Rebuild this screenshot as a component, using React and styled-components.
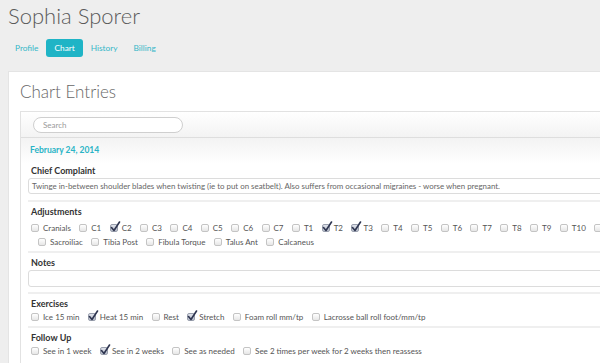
import React from "react";
import styled, { createGlobalStyle } from "styled-components";

const GlobalStyle = createGlobalStyle`
  html, body {
    margin: 0;
    padding: 0;
    overflow: hidden;
    background: #eeeeee;
    font-family: Lato, "Open Sans", sans-serif;
  }
`;

const Page = styled.div`
  width: 600px;
  height: 363px;
  overflow: hidden;
`;

const Header = styled.div`
  padding: 3px 8px 0 8px;
`;

const Name = styled.h1`
  margin: 0;
  font-size: 22px;
  line-height: 26px;
  font-weight: 300;
  color: #5a5a5a;
`;

const Tabs = styled.div`
  display: flex;
  margin-top: 10px;
  margin-left: -1px;
`;

const Tab = styled.div`
  height: 18px;
  line-height: 18px;
  padding: 0 8px;
  font-size: 8.3px;
  border-radius: 3px;
  color: ${(p) => (p.active ? "#fff" : "#35b7c8")};
  background: ${(p) => (p.active ? "#1fb4c6" : "transparent")};
`;

const Panel = styled.div`
  margin: 14px -40px 0 8px;
  min-height: 300px;
  background: #fff;
  border-left: 1px solid #e4e4e4;
  border-top: 1px solid #e4e4e4;
  padding: 9px 0 0 11px;
`;

const PanelTitle = styled.h2`
  margin: 0;
  font-size: 17px;
  line-height: 22px;
  font-weight: 300;
  color: #666;
`;

const EntryBox = styled.div`
  margin-top: 8px;
  border: 1px solid #e2e2e2;
  border-right: none;
`;

const Toolbar = styled.div`
  height: 25px;
  display: flex;
  align-items: center;
  padding-left: 12px;
  background: linear-gradient(#ffffff, #f3f3f3);
  border-bottom: 1px solid #dedede;
`;

const Search = styled.input`
  box-sizing: border-box;
  width: 150px;
  height: 16px;
  border: 1px solid #cfcfcf;
  border-radius: 8px;
  background: #fff;
  padding: 0 9px;
  font-family: inherit;
  font-size: 8px;
  outline: none;
  &::placeholder {
    color: #9a9a9a;
  }
`;

const Entry = styled.div`
  padding: 6px 0 10px 7px;
  background: linear-gradient(#f3f3f3, #ffffff 26px);
`;

const EntryDate = styled.div`
  padding-left: 2px;
  font-size: 8.5px;
  line-height: 12px;
  font-weight: 700;
  color: #29b4c6;
  margin-bottom: 9px;
`;

const Section = styled.div`
  border-top: ${(p) => (p.first ? "none" : "2px solid #efefef")};
  padding: ${(p) => (p.first ? "0" : "4px")} 0 ${(p) => p.bottom || 2}px 0;
`;

const Label = styled.div`
  padding-left: 3px;
  font-size: 9px;
  line-height: 12px;
  font-weight: 700;
  color: #333;
`;

const TextBox = styled.div`
  box-sizing: border-box;
  margin-top: 1px;
  height: ${(p) => p.h || 16}px;
  line-height: ${(p) => (p.h || 16) - 2}px;
  border: 1px solid #dcdcdc;
  border-radius: 3px;
  padding-left: 3px;
  font-size: 7.9px;
  color: #666;
  white-space: nowrap;
  overflow: hidden;
`;

const CheckRow = styled.div`
  display: flex;
  white-space: nowrap;
  overflow: hidden;
  height: 14px;
  align-items: center;
  padding-left: ${(p) => (p.indent ? 10 : 3)}px;
  margin-top: ${(p) => p.top || 0}px;
`;

const Item = styled.div`
  display: flex;
  align-items: center;
  margin-right: 8.4px;
  font-size: 8px;
  color: #555;
  flex-shrink: 0;
`;

const Box = styled.span`
  position: relative;
  box-sizing: border-box;
  width: 8px;
  height: 8px;
  margin-right: 4px;
  border: 1px solid ${(p) => (p.checked ? "#9aa0ae" : "#c4c4c4")};
  border-radius: 2px;
  background: ${(p) =>
    p.checked
      ? "linear-gradient(#dfe2ea, #b9bfcc)"
      : "linear-gradient(#ffffff, #e6e6e6)"};
  svg {
    position: absolute;
    left: -1px;
    top: -4px;
  }
`;

const Check = ({ label, checked }) => (
  <Item>
    <Box checked={checked}>
      {checked && (
        <svg width="11" height="11" viewBox="0 0 11 11">
          <path
            d="M1.5 6.5 L4 9.5 L9.5 1"
            fill="none"
            stroke="#2e3550"
            strokeWidth="1.6"
            strokeLinecap="round"
            strokeLinejoin="round"
          />
        </svg>
      )}
    </Box>
    {label}
  </Item>
);

const spine = [
  "Cranials", "C1", "C2", "C3", "C4", "C5", "C6", "C7",
  "T1", "T2", "T3", "T4", "T5", "T6", "T7", "T8", "T9", "T10", "T11", "T12",
];
const spineChecked = ["C2", "T2", "T3"];
const lower = ["Sacroiliac", "Tibia Post", "Fibula Torque", "Talus Ant", "Calcaneus"];
const exercises = [
  ["Ice 15 min", false],
  ["Heat 15 min", true],
  ["Rest", false],
  ["Stretch", true],
  ["Foam roll mm/tp", false],
  ["Lacrosse ball roll foot/mm/tp", false],
];
const followUp = [
  ["See in 1 week", false],
  ["See in 2 weeks", true],
  ["See as needed", false],
  ["See 2 times per week for 2 weeks then reassess", false],
];

const App = () => {
  return (
    <Page>
      <GlobalStyle />
      <Header>
        <Name>Sophia Sporer</Name>
        <Tabs>
          <Tab>Profile</Tab>
          <Tab active>Chart</Tab>
          <Tab>History</Tab>
          <Tab>Billing</Tab>
        </Tabs>
      </Header>
      <Panel>
        <PanelTitle>Chart Entries</PanelTitle>
        <EntryBox>
          <Toolbar>
            <Search placeholder="Search" />
          </Toolbar>
          <Entry>
            <EntryDate>February 24, 2014</EntryDate>
            <Section first bottom={6}>
              <Label>Chief Complaint</Label>
              <TextBox>
                Twinge in-between shoulder blades when twisting (ie to put on
                seatbelt). Also suffers from occasional migraines - worse when
                pregnant.
              </TextBox>
            </Section>
            <Section>
              <Label>Adjustments</Label>
              <CheckRow top={3}>
                {spine.map((s) => (
                  <Check key={s} label={s} checked={spineChecked.includes(s)} />
                ))}
              </CheckRow>
              <CheckRow indent>
                {lower.map((s) => (
                  <Check key={s} label={s} />
                ))}
              </CheckRow>
            </Section>
            <Section bottom={5}>
              <Label>Notes</Label>
              <TextBox h={17} />
            </Section>
            <Section>
              <Label>Exercises</Label>
              <CheckRow>
                {exercises.map(([s, c]) => (
                  <Check key={s} label={s} checked={c} />
                ))}
              </CheckRow>
            </Section>
            <Section>
              <Label>Follow Up</Label>
              <CheckRow>
                {followUp.map(([s, c]) => (
                  <Check key={s} label={s} checked={c} />
                ))}
              </CheckRow>
            </Section>
          </Entry>
        </EntryBox>
      </Panel>
    </Page>
  );
};

export default App;
